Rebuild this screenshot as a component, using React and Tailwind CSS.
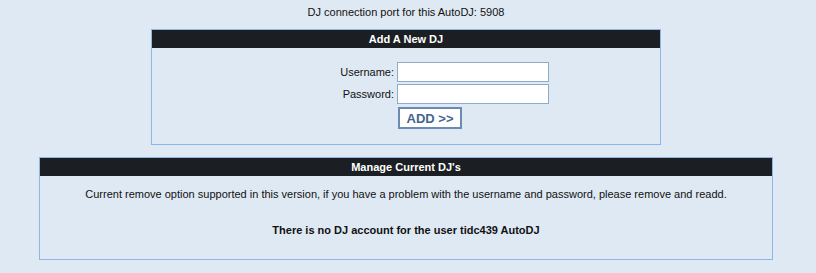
import React from 'react';

const Panel = ({ title, width, children }) => (
    <div className={`${width} border border-[#8db6e6]`}>
        <div className="h-[18px] bg-[#1b1f23] flex items-center justify-center text-white font-bold text-[11px] leading-[13px]">
            {title}
        </div>
        {children}
    </div>
);

const Field = ({ label, type }) => (
    <div className="flex items-center">
        <label className="w-[245px] pr-[3px] text-right text-[11px] leading-[13px] text-[#111]">{label}</label>
        <input type={type} className="w-[152px] h-[20px] bg-white border border-[#8fabc9] outline-none" />
    </div>
);

export default function App() {
    return (
        <div className="min-h-[273px] bg-[#dfe9f4]" style={{ fontFamily: '"Liberation Sans", Arial, sans-serif' }}>
            <div className="w-[812px] flex flex-col items-center pt-[6px]">
                <p className="text-[11px] leading-[13px] text-[#111]">
                    DJ connection port for this AutoDJ: 5908
                </p>

                {/* Add a new DJ */}
                <div className="mt-[10px]">
                    <Panel title="Add A New DJ" width="w-[510px]">
                        <div className="pt-[14px] pb-[15px] flex flex-col gap-[2px]">
                            <Field label="Username:" type="text" />
                            <Field label="Password:" type="password" />
                            <div className="flex pl-[246px] pt-[1px]">
                                <button className="w-[64px] h-[22px] bg-white border-2 border-[#6a8cb3] text-[#43668f] font-bold text-[13px] leading-[15px]">
                                    ADD &gt;&gt;
                                </button>
                            </div>
                        </div>
                    </Panel>
                </div>

                {/* Manage current DJs */}
                <div className="mt-[12px]">
                    <Panel title="Manage Current DJ's" width="w-[734px]">
                        <div className="pt-[12px] pb-[22px] flex flex-col items-center text-[11px] leading-[13px] text-[#111]">
                            <p>Current remove option supported in this version, if you have a problem with the username and password, please remove and readd.</p>
                            <p className="mt-[23px] font-bold">There is no DJ account for the user tidc439 AutoDJ</p>
                        </div>
                    </Panel>
                </div>
            </div>
        </div>
    );
}
